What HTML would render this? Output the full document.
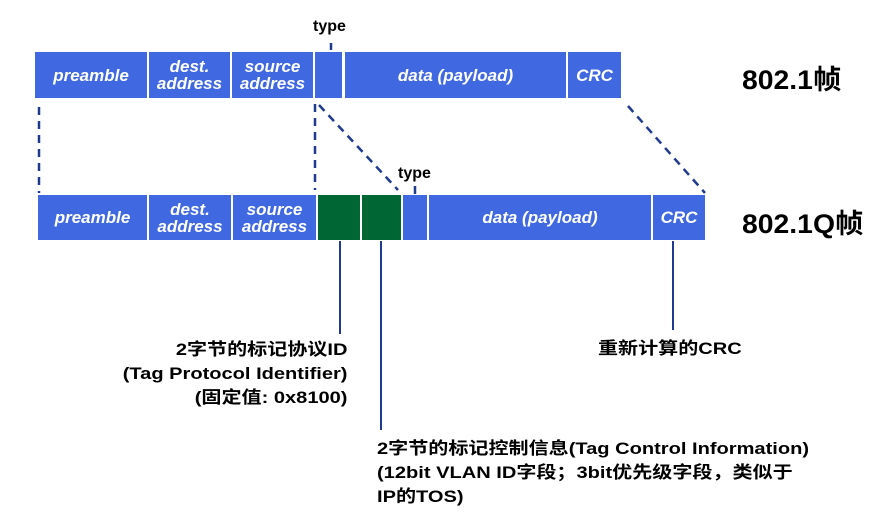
<!DOCTYPE html>
<html><head><meta charset="utf-8"><style>
body{margin:0;width:884px;height:523px;background:#fff;position:relative;overflow:hidden;font-family:"Liberation Sans","Noto Sans CJK SC",sans-serif}
.b{position:absolute;background:#4068E1;color:#fff;font-style:italic;font-weight:bold;font-size:17px;display:flex;align-items:center;justify-content:center;text-align:center;line-height:17px}
.g{background:#006634}
.t{position:absolute;font-weight:bold;color:#000;white-space:nowrap}
svg{position:absolute;left:0;top:0}
</style></head><body>
<svg width="884" height="523">
<g stroke="#1F3A8F" stroke-width="2.5" fill="none">
<line x1="331" y1="43" x2="331" y2="50"/>
<line x1="415" y1="186" x2="415" y2="194"/>
<g stroke-dasharray="8,6">
<line x1="39" y1="107" x2="39" y2="193"/>
<line x1="315" y1="104" x2="315" y2="190"/>
<line x1="319" y1="105" x2="398" y2="190"/>
<line x1="628" y1="106" x2="705" y2="193"/>
</g>
<line x1="340" y1="241" x2="340" y2="334" stroke-width="2"/>
<line x1="381" y1="241" x2="381" y2="430" stroke-width="2"/>
<line x1="673" y1="241" x2="673" y2="330" stroke-width="2"/>
</g>
</svg>
<div class="t" style="left:313px;top:18px;font-size:16px">type</div>
<div class="t" style="left:398px;top:165px;font-size:16px">type</div>
<div class="b" style="left:35px;top:52px;width:112px;height:46px">preamble</div>
<div class="b" style="left:149px;top:52px;width:81px;height:46px">dest.<br>address</div>
<div class="b" style="left:232px;top:52px;width:81px;height:46px">source<br>address</div>
<div class="b" style="left:315px;top:52px;width:27px;height:46px"></div>
<div class="b" style="left:345px;top:52px;width:221px;height:46px">data (payload)</div>
<div class="b" style="left:568px;top:52px;width:53px;height:46px">CRC</div>
<div class="b" style="left:38px;top:195px;width:109px;height:45px">preamble</div>
<div class="b" style="left:149px;top:195px;width:82px;height:45px">dest.<br>address</div>
<div class="b" style="left:233px;top:195px;width:83px;height:45px">source<br>address</div>
<div class="b g" style="left:318px;top:195px;width:42px;height:45px"></div>
<div class="b g" style="left:362px;top:195px;width:39px;height:45px"></div>
<div class="b" style="left:403px;top:195px;width:24px;height:45px"></div>
<div class="b" style="left:429px;top:195px;width:222px;height:45px">data (payload)</div>
<div class="b" style="left:653px;top:195px;width:52px;height:45px">CRC</div>
<div class="t" style="left:742px;top:58px;font-size:27px;transform:scaleX(1.05);transform-origin:left">802.1帧</div>
<div class="t" style="left:742px;top:202px;font-size:27px;transform:scaleX(1.05);transform-origin:left">802.1Q帧</div>
<div class="t" style="right:537px;top:338px;font-size:17px;line-height:24px;text-align:right;transform:scaleX(1.18);transform-origin:right">2字节的标记协议ID<br>(Tag Protocol Identifier)<br>(固定值: 0x8100)</div>
<div class="t" style="left:377px;top:437px;font-size:17px;line-height:24px;transform:scaleX(1.18);transform-origin:left">2字节的标记控制信息(Tag Control Information)<br>(12bit VLAN ID字段；3bit优先级字段，类似于<br>IP的TOS)</div>
<div class="t" style="left:598px;top:337px;font-size:17px;line-height:24px;transform:scaleX(1.18);transform-origin:left">重新计算的CRC</div>
</body></html>
